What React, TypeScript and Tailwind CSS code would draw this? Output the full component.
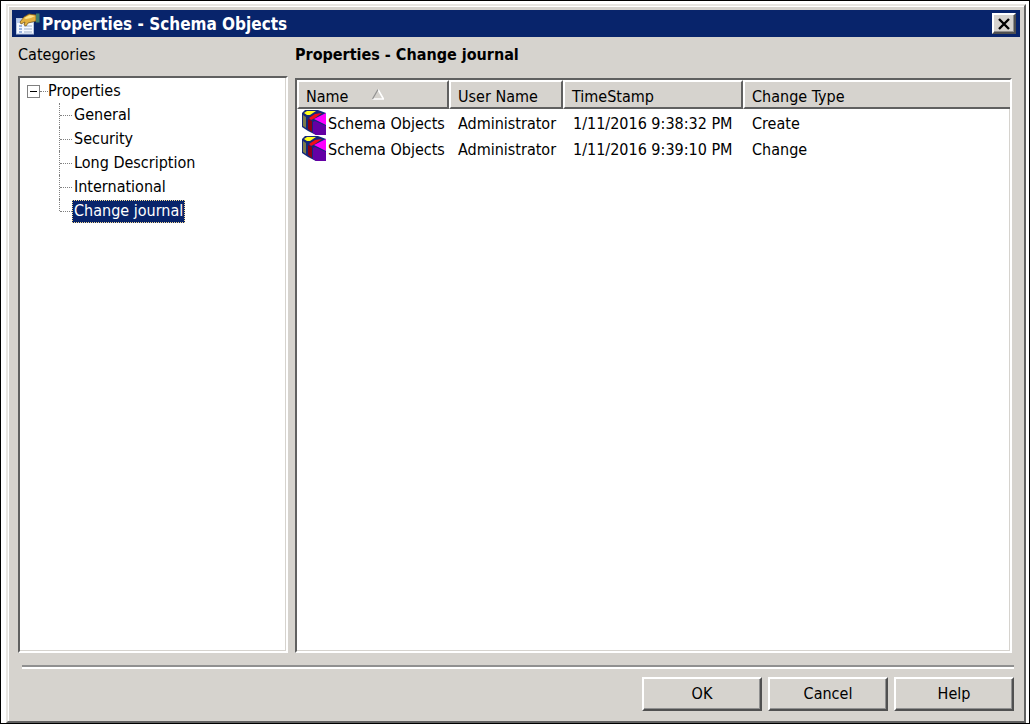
import React, { useState } from 'react';

const categories = ['General', 'Security', 'Long Description', 'International', 'Change journal'];

const journal = [
  { name: 'Schema Objects', user: 'Administrator', time: '1/11/2016 9:38:32 PM', type: 'Create' },
  { name: 'Schema Objects', user: 'Administrator', time: '1/11/2016 9:39:10 PM', type: 'Change' },
];

const PropertiesIcon = () => (
  <svg viewBox="0 0 24 22" className="h-[22px] w-6 flex-shrink-0" aria-hidden="true">
    <rect x="0.5" y="5.5" width="17" height="15.5" fill="#f4f8ff" stroke="#b4c4e0" />
    <path d="M1 6h16v4H1z" fill="#b9cdf0" />
    <path d="M3 13h3M3 16h3M3 19h3" stroke="#7f9fd8" strokeWidth="1.5" />
    <path d="M8 13h8M8 16h8M8 19h8" stroke="#b9c6dc" strokeWidth="1.5" />
    <path d="M4 9l4-5 5-3 7 1v6l-4 1-4 1-2 3-2-1 1-3-4 2z" fill="#e2b040" stroke="#7d5c1c" strokeWidth="0.8" />
    <path d="M8 5l6-3 5 1-4 2-5 1z" fill="#fbe38a" />
    <path d="M20 0.500h3.500v9H20z" fill="#3f7f6c" />
  </svg>
);

const CubeIcon = () => (
  <svg viewBox="0 0 24 25" className="h-[25px] w-6 flex-shrink-0" aria-hidden="true">
    <path d="M0 3L3 0h13l8 3v22H14L6 21 0 17z" fill="#14287a" />
    <path d="M1 5l3 2v11l-3-2z" fill="#7b7b4a" />
    <path d="M2 3l3-2h9L8 5H5z" fill="#ffff1f" />
    <path d="M6 9l4 2v11l-4-3z" fill="#8b0015" />
    <path d="M7 8l6-4 7-1-7 5-4 2z" fill="#f20d18" />
    <path d="M12 9l12-6v12z" fill="#ff00ff" />
    <path d="M11 12l2-1 11 5v9H14l-3-2z" fill="#6400a4" />
  </svg>
);

const SortIcon = () => (
  <svg viewBox="0 0 12 11" className="-mt-1 h-[11px] w-3" aria-hidden="true">
    <path d="M6 0.500L11.500 10H0.500" fill="none" stroke="#fff" strokeWidth="1.5" />
    <path d="M6 0.500L0.500 10" fill="none" stroke="#909090" strokeWidth="1.2" />
  </svg>
);

const CloseIcon = () => (
  <svg viewBox="0 0 12 12" className="h-3 w-3" aria-hidden="true">
    <path d="M1 1l10 10M11 1L1 11" stroke="#000" strokeWidth="2.400" />
  </svg>
);

const sunken = 'border-2 border-t-[#606060] border-l-[#606060] border-r-white border-b-white bg-white';
const raised = 'border-2 border-t-white border-l-white border-r-[#505050] border-b-[#505050] bg-[#d6d3ce] shadow-[inset_-1px_-1px_0_#909090]';

interface CategoryTreeProps {
  selected: string;
  onSelect: (name: string) => void;
}

const CategoryTree: React.FC<CategoryTreeProps> = ({ selected, onSelect }) => {
  const [open, setOpen] = useState(true);

  return (
    <nav aria-label="Categories" className={`flex-1 pt-px pl-[7px] shadow-[inset_-1px_-1px_0_#d6d3ce] ${sunken}`}>
      <div className="flex h-6 items-center">
        <button
          aria-label="Toggle properties"
          aria-expanded={open}
          onClick={() => setOpen(!open)}
          className="flex h-[13px] w-[13px] items-center justify-center border border-[#808080]"
        >
          <span className="h-px w-[7px] bg-black" />
        </button>
        <span className="w-2 border-t border-dotted border-[#808080]" />
        <span>Properties</span>
      </div>
      {open && (
        <ul>
          {categories.map((name, i) => (
            <li key={name} className="flex h-6 items-center pl-8">
              <span className={`border-l border-dotted border-[#808080] ${i === categories.length - 1 ? 'h-3 self-start' : 'h-6'}`} />
              <span className="w-3 border-t border-dotted border-[#808080]" />
              <button
                onClick={() => onSelect(name)}
                className={`h-[23px] whitespace-nowrap px-px border ${name === selected ? 'border-dotted border-[#f5db95] bg-[#08246b] text-white' : 'border-transparent'}`}
              >
                {name}
              </button>
            </li>
          ))}
        </ul>
      )}
    </nav>
  );
};

const headCell = 'h-[29px] border-2 border-t-white border-l-white border-r-[#606060] border-b-[#606060] bg-[#d6d3ce] pl-[7px] pt-1 text-left font-normal last:border-r-0';

const JournalTable = () => (
  <div className={`flex-1 shadow-[inset_-1px_-1px_0_#d6d3ce] ${sunken}`}>
    <table className="w-full table-fixed border-separate border-spacing-0 whitespace-nowrap">
      <colgroup>
        <col className="w-[152px]" />
        <col className="w-[114px]" />
        <col className="w-[180px]" />
        <col />
      </colgroup>
      <thead>
        <tr>
          <th className={headCell} aria-sort="ascending">
            <div className="flex items-center gap-6">
              Name
              <SortIcon />
            </div>
          </th>
          <th className={headCell}>User Name</th>
          <th className={headCell}>TimeStamp</th>
          <th className={headCell}>Change Type</th>
        </tr>
      </thead>
      <tbody>
        {journal.map((row) => (
          <tr key={row.time} className="h-[26px]">
            <td className="p-0 pl-[5px]">
              <div className="flex h-[26px] items-center gap-0.5">
                <CubeIcon />
                <span className="pt-1">{row.name}</span>
              </div>
            </td>
            <td className="p-0 pt-1 pl-[9px]">{row.user}</td>
            <td className="p-0 pt-1 pl-2.5">{row.time}</td>
            <td className="p-0 pt-1 pl-[9px]">{row.type}</td>
          </tr>
        ))}
      </tbody>
    </table>
  </div>
);

export default function App() {
  const [selected, setSelected] = useState('Change journal');

  return (
    <div className="flex min-h-screen flex-col border border-black bg-white pt-[3px] pl-[5px] pr-[3px] font-['DejaVu_Sans_Condensed','DejaVu_Sans',sans-serif] text-[16px] leading-5 text-black">
      <div className="flex flex-1 flex-col border-2 border-t-[#e8e6e2] border-l-[#e8e6e2] border-r-[#606060] border-b-[#606060] bg-[#d6d3ce] px-1 pt-1 shadow-[inset_1px_1px_0_#fff]">
        <header className="flex h-[27px] items-center gap-0.5 bg-[#08246b] pl-1 pr-1 text-white">
          <PropertiesIcon />
          <h1 className="flex-1 text-[17px] font-bold">Properties - Schema Objects</h1>
          <button aria-label="Close" className={`flex h-[21px] w-6 items-center justify-center ${raised}`}>
            <CloseIcon />
          </button>
        </header>

        <main className="flex flex-1 gap-[7px] pr-2 pl-1.5">
          <section className="flex w-[270px] flex-col">
            <h2 className="mb-[11px] pt-2">Categories</h2>
            <CategoryTree selected={selected} onSelect={setSelected} />
          </section>
          <section className="flex min-w-0 flex-1 flex-col">
            <h2 className="mb-[13px] pt-2 font-bold">Properties - {selected}</h2>
            <JournalTable />
          </section>
        </main>

        <hr className="mt-3 mr-1.5 ml-2.5 border-t-2 border-b-2 border-t-[#909090] border-b-white" />
        <footer className="flex justify-end gap-1.5 pt-2 pr-1.5 pb-[10px]">
          {['OK', 'Cancel', 'Help'].map((label) => (
            <button key={label} className={`h-[34px] w-[120px] ${raised}`}>
              {label}
            </button>
          ))}
        </footer>
      </div>
    </div>
  );
}
